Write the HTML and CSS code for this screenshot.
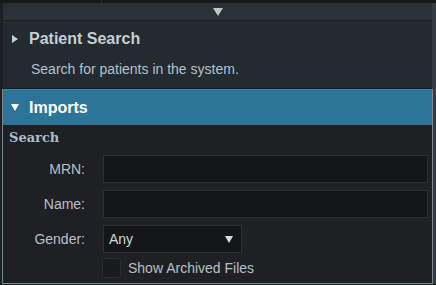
FILE: index.html
```html
<!DOCTYPE html>
<html lang="en">
<head>
<meta charset="UTF-8">
<title>Imports</title>
<link rel="stylesheet" href="styles.css">
</head>
<body>
<div class="topbar"><span class="topbar-split"></span></div>
<div class="wrap">
    <div class="toggle-bar"><span class="toggle-arrow"></span></div>
    <div class="panel">
        <div class="panel-head">
            <span class="caret caret-right"></span>
            <span class="panel-title">Patient Search</span>
        </div>
        <div class="panel-desc">Search for patients in the system.</div>
    </div>
    <div class="panel panel-open">
        <div class="panel-head head-active">
            <span class="caret caret-down"></span>
            <span class="panel-title">Imports</span>
        </div>
        <div class="panel-body">
            <h4 class="form-title">Search</h4>
            <div class="form-grid">
                <label class="form-label">MRN:</label>
                <input class="field" type="text">
                <label class="form-label">Name:</label>
                <input class="field" type="text">
                <label class="form-label">Gender:</label>
                <div class="select">
                    <span>Any</span>
                    <span class="select-arrow"></span>
                </div>
                <span></span>
                <label class="check-row">
                    <span class="checkbox"></span>
                    Show Archived Files
                </label>
            </div>
        </div>
    </div>
</div>
</body>
</html>
```

FILE: styles.css
```css
body {
    margin: 0;
    background-color: #1c2024;
    font-family: "Liberation Sans", Arial, sans-serif;
    width: 436px;
    height: 285px;
    overflow: hidden;
}

.topbar {
    height: 3px;
    background-color: #16181a;
    position: relative;
}
.topbar-split {
    position: absolute;
    left: 101px;
    top: 0;
    width: 1px;
    height: 3px;
    background-color: #2c3034;
}

.wrap {
    margin-left: 3px;
    width: 429px;
    border-right: 4px solid #343c42;
}

.toggle-bar {
    height: 17px;
    background-color: #2a3137;
    border-bottom: 1px solid #1a1e21;
    display: flex;
    justify-content: center;
    align-items: center;
}
.toggle-arrow {
    width: 0;
    height: 0;
    border-left: 5px solid transparent;
    border-right: 5px solid transparent;
    border-top: 8px solid #bfc6ca;
    margin-left: 1px;
}

.panel {
    background-color: #232a30;
    border-bottom: 1px solid #1a1e22;
}

.panel-head {
    height: 36px;
    display: flex;
    align-items: center;
    padding-left: 9px;
    color: #c5ced6;
}
.panel-title {
    font-size: 16px;
    font-weight: bold;
    margin-left: 11px;
}

.caret {
    width: 0;
    height: 0;
}
.caret-right {
    border-top: 4px solid transparent;
    border-bottom: 4px solid transparent;
    border-left: 6px solid #c5ced6;
}
.caret-down {
    border-left: 4px solid transparent;
    border-right: 4px solid transparent;
    border-top: 7px solid #ffffff;
    margin-left: -1px;
    margin-right: -1px;
}

.panel-desc {
    font-size: 14px;
    color: #b4c0c8;
    padding: 4px 0 11px 28px;
}

.panel-open {
    background-color: #1f2023;
    border: 1px solid #7a888e;
    border-top: none;
    margin-left: -1px;
    margin-right: -1px;
}

.head-active {
    background-color: #2c7599;
    border-top: 1px solid #3a86aa;
    color: #ffffff;
    height: 35px;
}

.panel-body {
    padding: 4px 0 4px 5px;
    height: 150px;
}

.form-title {
    font-family: "DejaVu Serif", Georgia, serif;
    font-size: 13px;
    font-weight: bold;
    color: #a9bccc;
    margin: 1px 0 10px 1px;
}

.form-grid {
    display: grid;
    grid-template-columns: 77px 325px;
    column-gap: 18px;
    row-gap: 7px;
    align-items: center;
}

.form-label {
    text-align: right;
    font-size: 14px;
    color: #b6c0c8;
}

.field {
    height: 28px;
    box-sizing: border-box;
    background-color: #151618;
    border: 1px solid #2c2e30;
    margin: 0;
}

.select {
    width: 139px;
    height: 28px;
    box-sizing: border-box;
    background-color: #151618;
    border: 1px solid #2c2e30;
    display: flex;
    align-items: center;
    justify-content: space-between;
    padding: 0 8px 0 5px;
    font-size: 14px;
    color: #d0d6da;
}
.select-arrow {
    width: 0;
    height: 0;
    border-left: 4px solid transparent;
    border-right: 4px solid transparent;
    border-top: 7px solid #d8dde0;
}

.check-row {
    display: flex;
    align-items: center;
    font-size: 14px;
    color: #b6c0c8;
    margin-top: -2px;
    margin-left: -1px;
}
.checkbox {
    width: 17px;
    height: 18px;
    background-color: #191a1c;
    border: 1px solid #2a2c2e;
    border-radius: 2px;
    margin-right: 7px;
}
```
